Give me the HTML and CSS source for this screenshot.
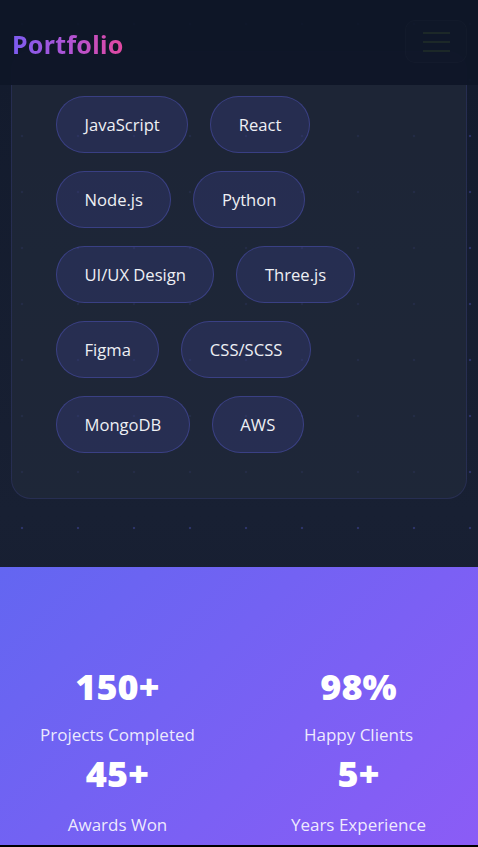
FILE: index.html
```html
<!DOCTYPE html>
<html lang="en">
<head>
<meta charset="utf-8">
<meta name="viewport" content="width=device-width, initial-scale=1">
<title>Portfolio</title>
<link rel="stylesheet" href="styles.css">
</head>
<body>
<header class="site-header">
  <div class="logo">Portfolio</div>
  <button class="menu-btn" aria-label="Menu">
    <span class="bar"></span>
    <span class="bar"></span>
    <span class="bar"></span>
  </button>
</header>

<main>
  <section class="skills">
    <div class="skills-card">
      <div class="pills">
        <span class="pill">JavaScript</span>
        <span class="pill">React</span>
        <span class="pill">Node.js</span>
        <span class="pill">Python</span>
        <span class="pill">UI/UX Design</span>
        <span class="pill">Three.js</span>
        <span class="pill">Figma</span>
        <span class="pill">CSS/SCSS</span>
        <span class="pill">MongoDB</span>
        <span class="pill">AWS</span>
      </div>
    </div>
  </section>

  <section class="stats">
    <div class="stat">
      <div class="stat-num">150+</div>
      <div class="stat-label">Projects Completed</div>
    </div>
    <div class="stat">
      <div class="stat-num">98%</div>
      <div class="stat-label">Happy Clients</div>
    </div>
    <div class="stat">
      <div class="stat-num">45+</div>
      <div class="stat-label">Awards Won</div>
    </div>
    <div class="stat">
      <div class="stat-num">5+</div>
      <div class="stat-label">Years Experience</div>
    </div>
  </section>
  <footer class="footer"></footer>
</main>
</body>
</html>
```

FILE: styles.css
```css
* { box-sizing: border-box; }

html, body {
  margin: 0;
  padding: 0;
}

body {
  font-family: "Open Sans", "Noto Sans", sans-serif;
  color: #e5e7eb;
  background-color: #151c2e;
  background-image:
    radial-gradient(circle, rgba(99, 102, 241, 0.28) 0, rgba(99, 102, 241, 0.28) 1px, transparent 1.6px),
    linear-gradient(180deg, #121a2c 0%, #182033 60%, #151c2e 100%);
  background-size: 56px 56px, 100% 100%;
  background-position: -6px -4px, 0 0;
  overflow: hidden;
}

.site-header {
  position: fixed;
  top: 0;
  left: 0;
  right: 0;
  height: 85px;
  z-index: 10;
  display: flex;
  align-items: center;
  justify-content: space-between;
  padding: 0 11px 0 12px;
  background: rgba(15, 22, 40, 0.96);
}

.logo {
  font-family: "Noto Sans", sans-serif;
  font-size: 25px;
  font-weight: 700;
  letter-spacing: 0.3px;
  background: linear-gradient(90deg, #7c5cf0 0%, #b054d6 50%, #e2489f 100%);
  -webkit-background-clip: text;
  background-clip: text;
  color: transparent;
  margin-top: 2px;
}

.menu-btn {
  width: 62px;
  height: 43px;
  border: 1px solid rgba(255, 255, 255, 0.015);
  border-radius: 10px;
  background: rgba(255, 255, 255, 0.008);
  display: flex;
  flex-direction: column;
  align-items: center;
  justify-content: center;
  gap: 7px;
  padding: 0;
  margin-top: -2px;
}

.bar {
  display: block;
  width: 27px;
  height: 2px;
  background: #1c2828;
}

main {
  display: block;
}

.skills {
  padding: 51px 11px 68px;
}

.skills-card {
  background: rgba(33, 42, 58, 0.72);
  border: 1px solid rgba(99, 102, 241, 0.14);
  border-radius: 20px;
  padding: 44px 44px 45px 44px;
}

.pills {
  display: flex;
  flex-wrap: wrap;
  column-gap: 22px;
  row-gap: 18px;
}

.pill {
  display: inline-block;
  padding: 16px 27.5px 15px;
  font-size: 16.6px;
  line-height: 24px;
  color: #eef0f4;
  background: rgba(99, 102, 241, 0.14);
  border: 1px solid rgba(99, 102, 241, 0.32);
  border-radius: 999px;
}

.stats {
  background: linear-gradient(135deg, #6366f1 0%, #8b5cf6 100%);
  height: 278px;
  padding: 98px 0 0;
  display: grid;
  grid-template-columns: 1fr 1fr;
  align-content: start;
  row-gap: 4px;
}

.stat {
  text-align: center;
}

.stat-num {
  font-family: "Open Sans", sans-serif;
  font-size: 36px;
  font-weight: 800;
  line-height: 44px;
  color: #ffffff;
}

.stat-label {
  font-size: 17px;
  line-height: 26px;
  margin-top: 13px;
  color: rgba(255, 255, 255, 0.88);
}

.stat:nth-child(n+3) .stat-label {
  margin-top: 16px;
}

.stat:nth-child(odd) {
  padding-right: 4px;
}

.footer {
  height: 10px;
  background: #000;
}
```
